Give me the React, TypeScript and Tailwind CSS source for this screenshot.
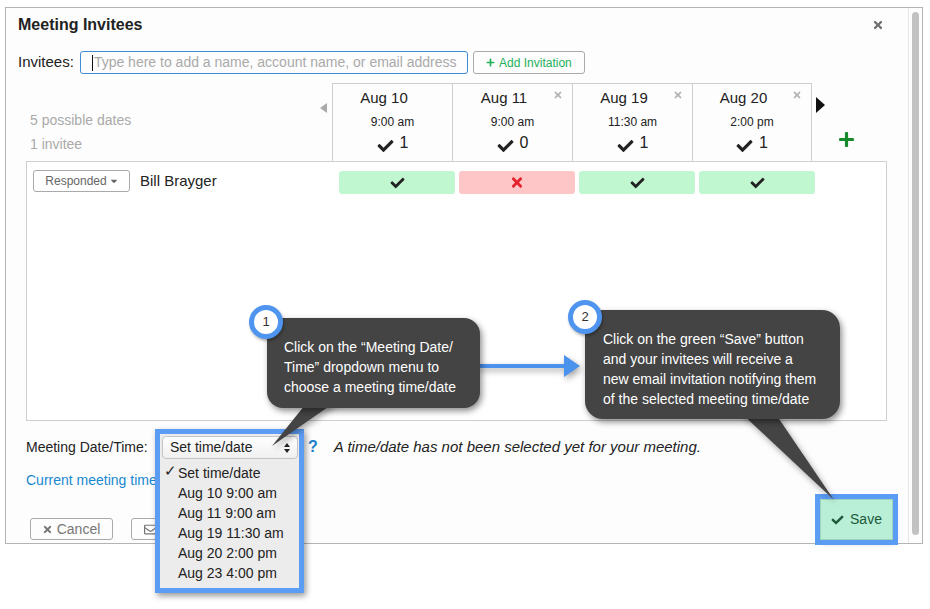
import { FaCheck, FaTimes, FaPlus, FaCaretDown, FaRegEnvelope } from "react-icons/fa";

interface DateOption {
  day: string;
  time: string;
  count: number;
  removable: boolean;
}

const dates: DateOption[] = [
  { day: "Aug 10", time: "9:00 am", count: 1, removable: false },
  { day: "Aug 11", time: "9:00 am", count: 0, removable: true },
  { day: "Aug 19", time: "11:30 am", count: 1, removable: true },
  { day: "Aug 20", time: "2:00 pm", count: 1, removable: true },
];

const responses = [true, false, true, true];

const options = [
  "Set time/date",
  "Aug 10 9:00 am",
  "Aug 11 9:00 am",
  "Aug 19 11:30 am",
  "Aug 20 2:00 pm",
  "Aug 23 4:00 pm",
];

const DateColumn = ({ d, last }: { d: DateOption; last: boolean }) => (
  <div
    className={`relative flex h-[78px] w-[120px] flex-col items-center border-l border-t border-[#cfcfcf] pt-[4px] ${
      last ? "border-r" : ""
    }`}
  >
    {d.removable && (
      <FaTimes className="absolute right-[9px] top-[6px] h-[10px] w-[10px] text-[#b5b5b5]" />
    )}
    <div className="pr-[17px] text-[15px] leading-[20px] text-[#222]">{d.day}</div>
    <div className="mt-[6px] text-[12px] leading-[16px] text-[#222]">{d.time}</div>
    <div className="mt-[3px] flex items-start gap-[6px] leading-[20px]">
      <FaCheck className="mt-[5px] h-[16px] w-[17px] text-[#222]" />
      <span className="text-[16px] text-[#222]">{d.count}</span>
    </div>
  </div>
);

const TimeDropdown = () => (
  <div className="relative h-[22px] w-[136px]">
    <div className="absolute -left-[7px] -top-[7px] w-[149px] border-[5px] border-[#5b9cf5] bg-[#ececec] pb-[5px] shadow-[2px_3px_6px_rgba(0,0,0,0.4)]">
      <div className="ml-[2px] mt-[2px] flex h-[23px] w-[136px] items-center justify-between rounded-[4px] border border-[#c4c4c4] bg-gradient-to-b from-white to-[#f0f0f0] pl-[7px] pr-[7px]">
        <span className="text-[14px] text-[#222]">Set time/date</span>
        <span className="flex flex-col items-center gap-[2px]">
          <span className="h-0 w-0 border-x-[3.5px] border-b-[4px] border-x-transparent border-b-[#222]" />
          <span className="h-0 w-0 border-x-[3.5px] border-t-[4px] border-x-transparent border-t-[#222]" />
        </span>
      </div>
      <ul className="mt-[4px]">
        {options.map((o, i) => (
          <li key={o} className="relative pl-[18px] text-[14px] leading-[20px] text-[#222]">
            {i === 0 && <span className="absolute left-[4px] top-[-2px] text-[15px]">✓</span>}
            {o}
          </li>
        ))}
      </ul>
    </div>
  </div>
);

const Callouts = () => (
  <>
    <svg
      className="pointer-events-none absolute left-0 top-0 h-[609px] w-[930px] drop-shadow-[2px_3px_3px_rgba(0,0,0,0.35)]"
      viewBox="0 0 930 609"
    >
      <polygon points="309,400 338,400 272,446" fill="#444" />
      <polygon points="738,410 773,410 834,500" fill="#444" />
      <line x1="476" y1="366" x2="567" y2="366" stroke="#4b92ec" strokeWidth="4" />
      <polygon points="564,355 580,366 564,377" fill="#4b92ec" />
    </svg>

    <div className="absolute left-[267px] top-[318px] h-[90px] w-[213px] rounded-[16px] bg-[#444] pl-[17px] pt-[19px] text-[14px] leading-[20px] text-white shadow-[2px_3px_6px_rgba(0,0,0,0.45)]">
      Click on the “Meeting Date/
      <br />
      Time” dropdown menu to
      <br />
      choose a meeting time/date
    </div>
    <div className="absolute left-[585px] top-[310px] h-[109px] w-[255px] rounded-[18px] bg-[#444] pl-[18px] pt-[19px] text-[14px] leading-[20px] text-white shadow-[2px_3px_6px_rgba(0,0,0,0.45)]">
      Click on the green “Save” button
      <br />
      and your invitees will receive a
      <br />
      new email invitation notifying them
      <br />
      of the selected meeting time/date
    </div>

    <div className="absolute left-[249px] top-[305px] flex h-[34px] w-[34px] items-center justify-center rounded-full border-[5px] border-[#4f95ef] bg-white text-[13px] text-[#333] shadow-[1px_2px_3px_rgba(0,0,0,0.3)]">
      1
    </div>
    <div className="absolute left-[568px] top-[300px] flex h-[34px] w-[34px] items-center justify-center rounded-full border-[5px] border-[#4f95ef] bg-white text-[13px] text-[#333] shadow-[1px_2px_3px_rgba(0,0,0,0.3)]">
      2
    </div>
  </>
);

const App = () => {
  return (
    <div className="relative h-[609px] w-[930px] overflow-hidden bg-white font-['Liberation_Sans',Arial,sans-serif] text-[14px] text-[#333]">
      <div className="ml-[5px] mt-[7px] flex h-[537px] w-[918px] border border-[#b3b3b3] bg-[#fdfdfd]">
        <div className="flex flex-1 flex-col">
          {/* header */}
          <div className="flex items-center justify-between pl-[12px] pr-[25px] pt-[7px]">
            <h2 className="text-[16px] font-bold leading-[20px] text-[#222]">Meeting Invitees</h2>
            <FaTimes className="h-[12px] w-[10px] text-[#6f6f6f]" />
          </div>

          {/* invitees input */}
          <div className="mt-[16px] flex items-center pl-[12px]">
            <span className="text-[15px] text-[#222]">Invitees:</span>
            <div className="ml-[6px] flex h-[23px] w-[388px] items-center rounded-[3px] border border-[#3f8bd6] pl-[11px]">
              <span className="mr-[1px] h-[16px] w-[1px] bg-[#111]" />
              <span className="text-[14px] text-[#aaa]">
                Type here to add a name, account name, or email address
              </span>
            </div>
            <button className="ml-[5px] flex h-[23px] w-[112px] items-center justify-center gap-[4px] rounded-[3px] border border-[#aaa] text-[12px] text-[#22b05a]">
              <FaPlus className="h-[9px] w-[9px]" />
              Add Invitation
            </button>
          </div>

          {/* date header */}
          <div className="ml-[20px] mt-[9px] flex h-[78px]">
            <div className="flex w-[306px] justify-between">
              <div className="pl-[4px] pt-[25px] text-[14px] leading-[24px] text-[#aaa]">
                <div>5 possible dates</div>
                <div>1 invitee</div>
              </div>
              <span className="mr-[5px] mt-[20px] h-0 w-0 border-y-[5.5px] border-r-[7px] border-y-transparent border-r-[#aaa]" />
            </div>
            {dates.map((d, i) => (
              <DateColumn key={d.day} d={d} last={i === dates.length - 1} />
            ))}
            <div className="flex">
              <span className="ml-[4px] mt-[14px] h-0 w-0 border-y-[8px] border-l-[9px] border-y-transparent border-l-[#111]" />
              <FaPlus className="ml-[13px] mt-[48px] h-[17px] w-[17px] text-[#178a2b]" />
            </div>
          </div>

          {/* invitee rows */}
          <div className="ml-[20px] h-[260px] w-[861px] border border-[#cfcfcf] bg-white">
            <div className="flex items-center pl-[6px] pt-[6px]">
              <div className="flex w-[306px] items-center">
                <button className="flex h-[22px] w-[97px] items-center justify-center gap-[3px] rounded-[3px] border border-[#aaa] text-[12px] text-[#666]">
                  Responded
                  <FaCaretDown className="h-[10px] w-[8px]" />
                </button>
                <span className="ml-[10px] text-[15px] text-[#222]">Bill Brayger</span>
              </div>
              <div className="mt-[3px] flex gap-[4px]">
                {responses.map((ok, i) => (
                  <div
                    key={i}
                    className={`flex h-[23px] w-[116px] items-center justify-center rounded-[3px] ${
                      ok ? "bg-[#c0f6d0]" : "bg-[#ffc6c8]"
                    }`}
                  >
                    {ok ? (
                      <FaCheck className="h-[14px] w-[15px] text-[#222]" />
                    ) : (
                      <FaTimes className="h-[15px] w-[12px] text-[#e3222c]" />
                    )}
                  </div>
                ))}
              </div>
            </div>
          </div>

          {/* meeting date */}
          <div className="mt-[15px] flex h-[22px] items-center pl-[20px]">
            <span className="w-[136px] text-[14px] text-[#222]">Meeting Date/Time:</span>
            <TimeDropdown />
            <span className="ml-[10px] text-[16px] font-bold text-[#1a7fcf]">?</span>
            <span className="ml-[16px] text-[15px] italic text-[#222]">
              A time/date has not been selected yet for your meeting.
            </span>
          </div>

          <div className="mt-[12px] pl-[20px] text-[14px] leading-[20px]">
            <a className="text-[#1a88d0]">Current meeting time zone:</a>
            <span className="ml-[8px] text-[#222]">US/Eastern</span>
          </div>

          {/* footer */}
          <div className="mt-[9px] flex items-end justify-between pl-[24px] pr-[15px]">
            <div className="flex gap-[18px]">
              <button className="flex h-[22px] w-[83px] items-center justify-center gap-[5px] rounded-[3px] border border-[#aaa] text-[14px] text-[#777]">
                <FaTimes className="h-[11px] w-[9px]" />
                Cancel
              </button>
              <button className="flex h-[22px] w-[92px] items-center gap-[5px] rounded-[3px] border border-[#aaa] pl-[11px] text-[14px] text-[#777]">
                <FaRegEnvelope className="h-[13px] w-[15px]" />
                Email
              </button>
            </div>
            <button className="flex h-[41px] w-[73px] items-center justify-center gap-[6px] border border-[#9fd4ba] bg-[#b9eed7] text-[14px] text-[#1c5a3a] shadow-[2px_3px_5px_rgba(0,0,0,0.35)] outline-[5px] outline-[#5b9cf5]">
              <FaCheck className="h-[12px] w-[13px]" />
              Save
            </button>
          </div>
        </div>

        {/* scrollbar */}
        <div className="flex w-[14px] justify-center border-l border-[#e6e6e6] pb-[8px] pt-[4px]">
          <div className="h-full w-[7px] rounded-full bg-[#c2c2c2]" />
        </div>
      </div>

      <Callouts />
    </div>
  );
};

export default App;
